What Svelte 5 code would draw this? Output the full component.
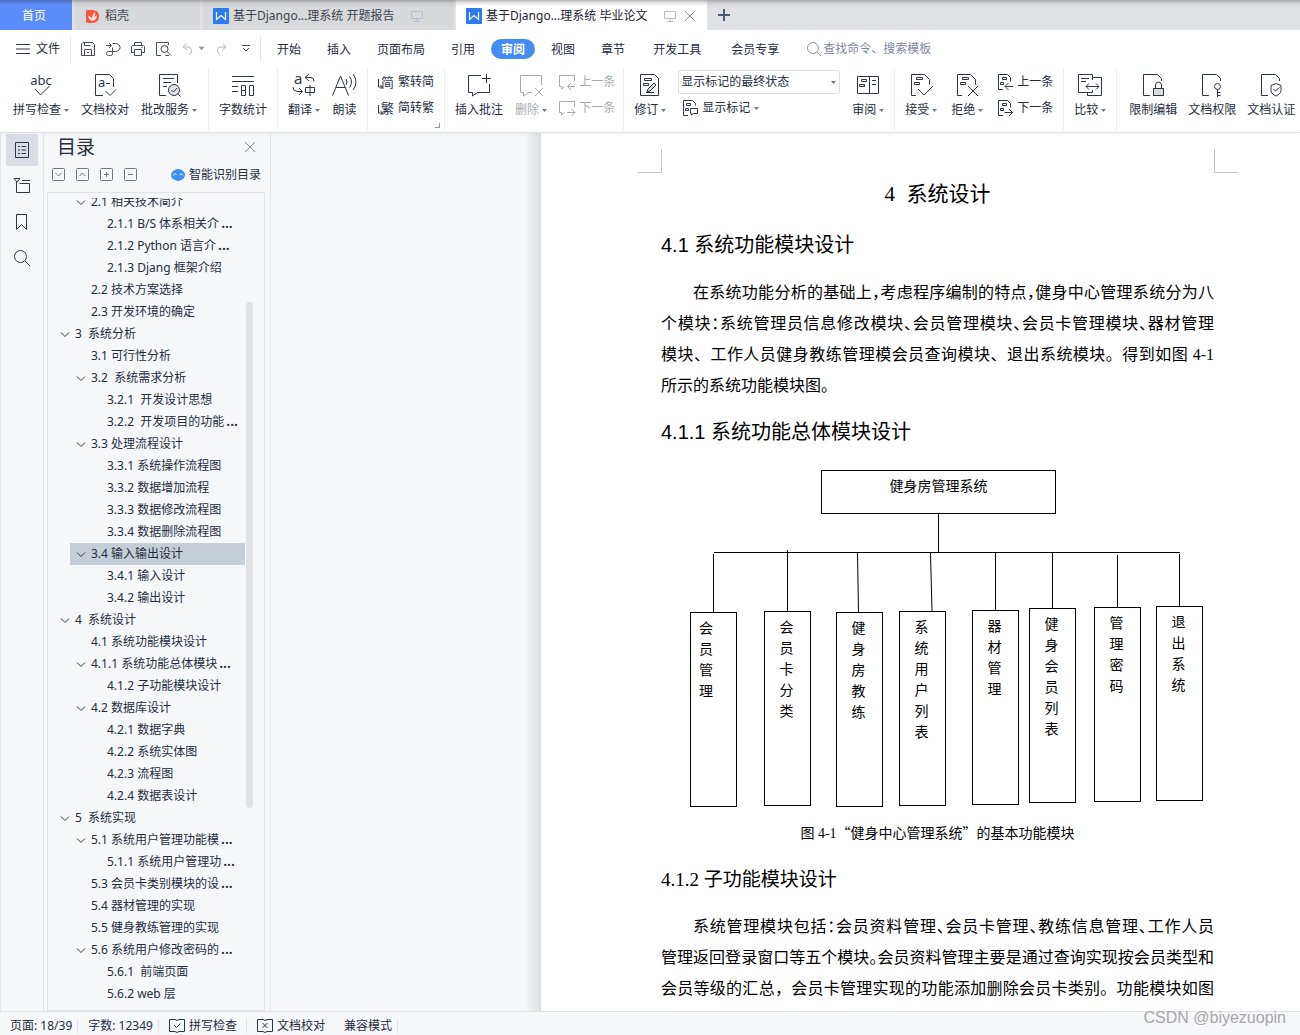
<script lang="ts">
  interface Heading {
    level: number;
    text: string;
    open?: boolean;
    cut?: boolean;
  }

  interface Module {
    x: number;
    y: number;
    name: string;
    start?: boolean;
  }

  const menus = ['开始', '插入', '页面布局', '引用', '审阅', '视图', '章节', '开发工具', '会员专享'];

  const headings: Heading[] = [
    { level: 2, text: '2.1 相关技术简介', open: true },
    { level: 3, text: '2.1.1 B/S 体系相关介', cut: true },
    { level: 3, text: '2.1.2 Python 语言介', cut: true },
    { level: 3, text: '2.1.3 Djang 框架介绍' },
    { level: 2, text: '2.2 技术方案选择' },
    { level: 2, text: '2.3 开发环境的确定' },
    { level: 1, text: '3  系统分析', open: true },
    { level: 2, text: '3.1 可行性分析' },
    { level: 2, text: '3.2  系统需求分析', open: true },
    { level: 3, text: '3.2.1  开发设计思想' },
    { level: 3, text: '3.2.2  开发项目的功能', cut: true },
    { level: 2, text: '3.3 处理流程设计', open: true },
    { level: 3, text: '3.3.1 系统操作流程图' },
    { level: 3, text: '3.3.2 数据增加流程' },
    { level: 3, text: '3.3.3 数据修改流程图' },
    { level: 3, text: '3.3.4 数据删除流程图' },
    { level: 2, text: '3.4 输入输出设计', open: true },
    { level: 3, text: '3.4.1 输入设计' },
    { level: 3, text: '3.4.2 输出设计' },
    { level: 1, text: '4  系统设计', open: true },
    { level: 2, text: '4.1 系统功能模块设计' },
    { level: 2, text: '4.1.1 系统功能总体模块', open: true, cut: true },
    { level: 3, text: '4.1.2 子功能模块设计' },
    { level: 2, text: '4.2 数据库设计', open: true },
    { level: 3, text: '4.2.1 数据字典' },
    { level: 3, text: '4.2.2 系统实体图' },
    { level: 3, text: '4.2.3 流程图' },
    { level: 3, text: '4.2.4 数据表设计' },
    { level: 1, text: '5  系统实现', open: true },
    { level: 2, text: '5.1 系统用户管理功能模', open: true, cut: true },
    { level: 3, text: '5.1.1 系统用户管理功', cut: true },
    { level: 2, text: '5.3 会员卡类别模块的设', cut: true },
    { level: 2, text: '5.4 器材管理的实现' },
    { level: 2, text: '5.5 健身教练管理的实现' },
    { level: 2, text: '5.6 系统用户修改密码的', open: true, cut: true },
    { level: 3, text: '5.6.1  前端页面' },
    { level: 3, text: '5.6.2 web 层' }
  ];

  const modules: Module[] = [
    { x: 29, y: 142, name: '会员管理', start: true },
    { x: 103, y: 141, name: '会员卡分类' },
    { x: 175, y: 142, name: '健身房教练' },
    { x: 238, y: 141, name: '系统用户列表' },
    { x: 311, y: 140, name: '器材管理' },
    { x: 368, y: 138, name: '健身会员列表' },
    { x: 433, y: 137, name: '管理密码' },
    { x: 495, y: 136, name: '退出系统' }
  ];

  let activeMenu = $state('审阅');
  let selected = $state(16);
  let markup = $state('显示标记的最终状态');
</script>

<svelte:head>
  <title>毕业论文</title>
</svelte:head>

{#snippet caret()}
  <svg class="caret" width="5" height="3" viewBox="0 0 5 3"><path d="M0 0h5L2.500 3z" /></svg>
{/snippet}

{#snippet wlogo()}
  <svg width="16" height="16" viewBox="0 0 16 16">
    <rect width="16" height="16" rx="1" fill="#2a7bf0" stroke="none" />
    <path d="M3.500 4v7.500L8 7.500l4.500 4V4" fill="none" stroke="#fff" stroke-width="1.200" />
  </svg>
{/snippet}

{#snippet monitor()}
  <svg class="monitor" width="12" height="12" viewBox="0 0 12 12">
    <path d="M.5 1.500h11v7H.5zM6 8.500v3M3 11.500h6" />
  </svg>
{/snippet}

{#snippet markDoc(kind: string)}
  <svg width="24" height="24" viewBox="0 0 24 24">
    {#if kind === 'pen'}
      <path d="M2.500 1.500h14l4 4v17h-18zM6.500 5.500h7v2h-7zM5.500 10.500h5v2h-5z" />
      <path d="M9 19l1-3 6-6 2 2-6 6zM8 19.500h8" fill="#d9dbe0" />
    {:else}
      <path d="M7 22.500H2.500v-21h13l5 5v5M7.500 4.500h6v2h-6zM5.500 9.500h5v2h-5z" />
      {#if kind === 'check'}
        <path d="M9 16l6 6 9-9" />
      {:else}
        <path d="M13 13l10 10M23 13L13 23" />
      {/if}
    {/if}
  </svg>
{/snippet}

{#snippet smallDoc(dir: string)}
  <svg width="16" height="16" viewBox="0 0 16 16">
    <path d="M6 15.500H1.500V.5h9l3 3v4M5.500 3.500h4v2h-4zM3.500 8.500h3v2h-3z" />
    {#if dir === 'prev'}
      <path d="M16 12.500H8.500M11.500 9L8 12.500l3.500 3.500" />
    {:else}
      <path d="M7.500 12.500h8M12 9l3.500 3.500L12 16" />
    {/if}
  </svg>
{/snippet}

{#snippet smallNote(dir: string)}
  <svg width="16" height="16" viewBox="0 0 16 16">
    <path d="M15.500 7V1.500H.5v11h2V15l3-2.500" />
    {#if dir === 'prev'}
      <path d="M16 12.500H9M12 9l-3.500 3.500L12 16" />
    {:else}
      <path d="M8 12.500h8M12.500 9l3.500 3.500-3.500 3.500" />
    {/if}
  </svg>
{/snippet}

{#snippet guard(kind: string)}
  <svg width="24" height="24" viewBox="0 0 24 24">
    <path d="M9 22.500H2.500v-21h14l4 4V8" />
    {#if kind === 'lock'}
      <path d="M14.500 15v-3a3 3 0 0 1 6 0v3" />
      <rect x="12.500" y="15.500" width="10" height="7" fill="#d9dbe0" />
    {:else if kind === 'key'}
      <circle cx="17.500" cy="13.500" r="3" />
      <path d="M17.500 16.500V24M17.500 19.500h3M17.500 22.500h3" />
    {:else}
      <path d="M17 10.500l5 2v5c0 3-3 4.500-5 5.500-2-1-5-2.500-5-5.500v-5zM14.500 16l2 2 4-3.500" />
    {/if}
  </svg>
{/snippet}

<div class="app">
  <header>
    <nav class="tabs" aria-label="文档标签">
      <button class="tab home">首页</button>
      <button class="tab docer">
        <svg width="13" height="15" viewBox="0 0 13 15">
          <path d="M0 3q0-2 2-2h4q7 0 7 6.500T6 14H2q-2 0-2-2z" fill="#f2553f" stroke="none" />
          <path d="M6.500 12C3 11 2 9 2.500 6.500 4 7 5.500 8 6 9.500 6 6.500 7 4.500 9 3c.5 2 0 3-.5 4.500L11 6.500C11 9 10 11 6.500 12z" fill="#fbd9d3" stroke="none" />
        </svg>
        稻壳
      </button>
      <button class="tab doc">{@render wlogo()}<span>基于Django...理系统 开题报告</span>{@render monitor()}</button>
      <button class="tab doc current">
        {@render wlogo()}<span>基于Django...理系统 毕业论文</span>{@render monitor()}
        <svg class="close" width="10" height="10" viewBox="0 0 10 10"><path d="M0 0l10 10M10 0L0 10" /></svg>
      </button>
      <button class="plus" aria-label="新建">
        <svg width="12" height="12" viewBox="0 0 12 12"><path d="M6 0v12M0 6h12" /></svg>
      </button>
    </nav>

    <div class="menubar">
      <button class="file">
        <svg width="14" height="10" viewBox="0 0 14 10"><path d="M0 .5h14M0 5h14M0 9.500h14" /></svg>
        文件
      </button>
      <div class="quick">
        <button aria-label="保存">
          <svg width="14" height="14" viewBox="0 0 14 14"><path d="M.5 13.500V2L2 .5h9.500l2 2v11zM3.500 13V7.500h7V13M3.500.5v3h6M6 10.500h2" /></svg>
        </button>
        <button aria-label="输出">
          <svg width="14" height="14" viewBox="0 0 14 14"><path d="M0 3.500h5M3 1l2.500 2.500L3 6M6.500 1.500h3a4 3.500 0 0 1 0 8H2.500a2 2 0 0 0 0 4h2a2 2 0 0 0 2-2v-6" /></svg>
        </button>
        <button aria-label="打印">
          <svg width="14" height="14" viewBox="0 0 14 14"><path d="M3.500 3.500v-3h7v3M3 10.500H.5v-6l1-1h11l1 1v6H11M3.500 7.500h7v6h-7zM10.500 5.500h1" /></svg>
        </button>
        <button aria-label="打印预览">
          <svg width="15" height="14" viewBox="0 0 15 14"><path d="M5 13.500H.5V.5h12V3M9.500 13.500H13" /><circle cx="8.500" cy="7" r="3.500" /><path d="M11 9.500l4 4" /></svg>
        </button>
        <button class="off undo" aria-label="撤销">
          <svg width="12" height="12" viewBox="0 0 12 12"><path d="M4 .5L1 4l4 3M1 4h6a4 4 0 0 1 0 7.500" /></svg>
          {@render caret()}
        </button>
        <button class="off" aria-label="恢复">
          <svg width="12" height="12" viewBox="0 0 12 12"><path d="M8 .5L11 4 7 7M11 4H5a4 4 0 0 0 0 7.500" /></svg>
        </button>
        <button aria-label="自定义快速访问">
          <svg width="8" height="7" viewBox="0 0 8 7"><path d="M0 .5h8M1 3l3 3 3-3" /></svg>
        </button>
      </div>
      <nav class="menus" aria-label="功能区">
        {#each menus as m}
          <button class:active={m === activeMenu} onclick={() => (activeMenu = m)}>{m}</button>
        {/each}
      </nav>
      <label class="search">
        <svg width="14" height="14" viewBox="0 0 14 14"><circle cx="6" cy="6" r="5.500" /><path d="M10 10l4 4" /></svg>
        <input type="text" aria-label="搜索" placeholder="查找命令、搜索模板" />
      </label>
    </div>

    <div class="ribbon">
      <div class="group first">
        <button class="tool">
          <svg width="24" height="24" viewBox="0 0 24 24"><text x="12" y="12" text-anchor="middle">abc</text><path d="M6 16l5.500 6 9-9" /></svg>
          <span>拼写检查{@render caret()}</span>
        </button>
        <button class="tool">
          <svg width="24" height="24" viewBox="0 0 24 24"><path d="M10 22.500H2.500v-21h14l4 4V14M12.500 18l4.500 4.500 6-6M13 10.500h4" /><text x="5" y="14">a</text></svg>
          <span>文档校对</span>
        </button>
        <button class="tool">
          <svg width="24" height="24" viewBox="0 0 24 24"><path d="M9 22.500H2.500v-21h18V10M6 5.500h11M6 9.500h8M6 13.500h4" /><circle cx="17" cy="17" r="5.500" fill="#e1e3e7" /><path d="M14.500 17l2 2 3.500-4M20.500 20.500l3 3" /></svg>
          <span>批改服务{@render caret()}</span>
        </button>
      </div>
      <div class="group">
        <button class="tool">
          <svg width="24" height="24" viewBox="0 0 24 24"><path d="M1 3.500h22M1 8.500h22M1 13.500h6M1 18.500h6M10.500 12.500h4v10h-4zM10.500 17.500h4M18.500 12.500h4v10h-4z" /></svg>
          <span>字数统计</span>
        </button>
      </div>
      <div class="group">
        <button class="tool">
          <svg width="24" height="24" viewBox="0 0 24 24"><text class="big" x="2" y="11">a</text><path d="M17 1l-4 3.500L17 8M13.500 4.500H19q3 0 3 4M1 14q0 4 4 4.500h5M7 15l3.500 3.500L7 22M13.500 14.500h9v5h-9zM18 12v11" /></svg>
          <span>翻译{@render caret()}</span>
        </button>
        <button class="tool">
          <svg width="25" height="24" viewBox="0 0 25 24"><path d="M.5 22.500L8.500 3l8 19.500M4 14.500h9.500M14 6q2 3 0 6M17.500 3.500q4 5.500 0 11M21 1q6 8 0 16" /></svg>
          <span>朗读</span>
        </button>
      </div>
      <div class="group corner">
        <div class="stack">
          <button class="line">
            <svg width="16" height="16" viewBox="0 0 16 16"><text x="3" y="13">简</text><path d="M.5 5v8h4M2.500 11l2 2-2 2" /></svg>
            繁转简
          </button>
          <button class="line">
            <svg width="16" height="16" viewBox="0 0 16 16"><text x="3" y="13">繁</text><path d="M.5 5v8h4M2.500 11l2 2-2 2" /></svg>
            简转繁
          </button>
        </div>
      </div>
      <div class="group snug">
        <button class="tool">
          <svg width="24" height="24" viewBox="0 0 24 24"><path d="M14 2.500H1.500v17h4V23l5-3.500h12V11M19.500 1v9M15 5.500h9" /></svg>
          <span>插入批注</span>
        </button>
        <button class="tool off">
          <svg width="24" height="24" viewBox="0 0 24 24"><path d="M22.500 12V2.500H1.500v17h3V23l5-3.500h4M16 15l8 8M24 15l-8 8" /></svg>
          <span>删除{@render caret()}</span>
        </button>
        <div class="stack">
          <button class="line off">{@render smallNote('prev')}上一条</button>
          <button class="line off">{@render smallNote('next')}下一条</button>
        </div>
      </div>
      <div class="group">
        <button class="tool">
          {@render markDoc('pen')}
          <span>修订{@render caret()}</span>
        </button>
        <div class="stack view">
          <div class="pick">
            <select aria-label="显示以供审阅" bind:value={markup}>
              <option>显示标记的最终状态</option>
              <option>最终状态</option>
              <option>显示标记的原始状态</option>
              <option>原始状态</option>
            </select>
            {@render caret()}
          </div>
          <button class="line">
            <svg width="16" height="16" viewBox="0 0 16 16"><path d="M6 15.500H1.500V.5h9l3 3v2M4.500 3.500h4v2h-4zM3.500 8.500h3v2h-3zM8.500 8.500h7v5h-4L9.500 15v-1.500h-1z" /></svg>
            显示标记{@render caret()}
          </button>
        </div>
        <button class="tool">
          <svg width="24" height="24" viewBox="0 0 24 24"><path d="M1.500 3.500h21v17h-21zM13.500 3.500v17M5.500 6.500h5v2h-5zM3.500 11.500h5v2h-5zM16 7.500h4M16 11.500h4" /></svg>
          <span>审阅{@render caret()}</span>
        </button>
      </div>
      <div class="group roomy">
        <button class="tool">{@render markDoc('check')}<span>接受{@render caret()}</span></button>
        <button class="tool">{@render markDoc('cross')}<span>拒绝{@render caret()}</span></button>
        <div class="stack">
          <button class="line">{@render smallDoc('prev')}上一条</button>
          <button class="line">{@render smallDoc('next')}下一条</button>
        </div>
      </div>
      <div class="group">
        <button class="tool">
          <svg width="24" height="24" viewBox="0 0 24 24"><path d="M14.500 7V1.500h-14v18h14V17M14.500 4.500h9v18h-14v-3M3 5.500h8M3 8.500h5M8 13.500h13M11 10.500l-3 3 3 3M18 10.500l3 3-3 3" /></svg>
          <span>比较{@render caret()}</span>
        </button>
      </div>
      <div class="group last">
        <button class="tool">{@render guard('lock')}<span>限制编辑</span></button>
        <button class="tool">{@render guard('key')}<span>文档权限</span></button>
        <button class="tool">{@render guard('shield')}<span>文档认证</span></button>
      </div>
    </div>
  </header>

  <div class="work">
    <nav class="rail" aria-label="导航窗格">
      <button class="on" aria-label="目录">
        <svg width="16" height="16" viewBox="0 0 16 16"><path d="M1.500.5h13v15h-13zM4 4.500h2M7.500 4.500H12M4 8h2M7.500 8H12M4 11.500h2M7.500 11.500H12" /></svg>
      </button>
      <button aria-label="章节">
        <svg width="16" height="16" viewBox="0 0 16 16"><path d="M0 .5h6L3 4zM8 2.500h8M2.500 4v10.500h13v-9h-10" /></svg>
      </button>
      <button aria-label="书签">
        <svg width="16" height="16" viewBox="0 0 16 16"><path d="M2.500.5h10v15l-5-5-5 5z" /></svg>
      </button>
      <button aria-label="查找">
        <svg width="16" height="16" viewBox="0 0 16 16"><circle cx="6.500" cy="6.500" r="6" /><path d="M11 11l5 5" /></svg>
      </button>
    </nav>

    <aside class="outline">
      <div class="title">
        <h2>目录</h2>
        <button aria-label="关闭">
          <svg width="10" height="10" viewBox="0 0 10 10"><path d="M0 0l10 10M10 0L0 10" /></svg>
        </button>
      </div>
      <div class="actions">
        {#each [['展开', 'M3.500 5l3 3 3-3'], ['折叠', 'M3.500 8l3-3 3 3'], ['增加', 'M6.500 4v5M4 6.500h5'], ['减少', 'M4 6.500h5']] as [name, d]}
          <button aria-label={name}>
            <svg width="13" height="13" viewBox="0 0 13 13"><rect x=".5" y=".5" width="12" height="12" rx="1" /><path {d} /></svg>
          </button>
        {/each}
        <button class="smart">
          <svg width="14" height="12" viewBox="0 0 14 12">
            <rect y="1" width="14" height="10" rx="5" fill="#3f8ef5" />
            <rect x="2" width="10" height="12" rx="5" fill="#3f8ef5" />
            <path d="M2 6.500l2-2 1.500 1.500M8.500 6l1.500-1.500 2 2" fill="none" stroke="#fff" />
          </svg>
          智能识别目录
        </button>
      </div>
      <div class="tree">
        <div class="clip">
          <ul>
            {#each headings as h, i}
              <li class="level{h.level}" class:selected={i === selected}>
                <button onclick={() => (selected = i)}>
                  <svg width="10" height="6" viewBox="0 0 10 6">{#if h.open}<path d="M1 1.500l4 4 4-4" />{/if}</svg>
                  <span>{h.text}{#if h.cut}<b>...</b>{/if}</span>
                </button>
              </li>
            {/each}
          </ul>
        </div>
        <div class="thumb"></div>
      </div>
    </aside>

    <div class="desk"></div>

    <main class="sheet">
      <div class="marks"><i></i><i></i></div>
      <article>
        <h1><span class="serif">4</span>&nbsp; 系统设计</h1>
        <h2>4.1 系统功能模块设计</h2>
        <p>
          <span class="row indent tight">在系统功能分析的基础上，考虑程序编制的特点，健身中心管理系统分为八</span>
          <span class="row tight">个模块：系统管理员信息修改模块、会员管理模块、会员卡管理模块、器材管理</span>
          <span class="row">模块、工作人员健身教练管理模会员查询模块、退出系统模块。得到如图 4-1</span>
          <span class="row end">所示的系统功能模块图。</span>
        </p>
        <h3>4.1.1 系统功能总体模块设计</h3>
        <figure>
          <div class="chart">
            <svg width="553" height="337" viewBox="0 0 553 337">
              <path d="M277.500 44v38M53 82.500h466M52.500 84v58M126.500 80v61M196.500 83l1 59M269.500 83l1.500 58M334.500 82v58M391.500 82v56M456.500 85v52M518.500 84v52" />
            </svg>
            <div class="root">健身房管理系统</div>
            {#each modules as m}
              <div class="module" class:start={m.start} style="left: {m.x}px; top: {m.y}px"><span>{m.name}</span></div>
            {/each}
          </div>
          <figcaption>图 4-1<span>“健身中心管理系统”的基本功能模块</span></figcaption>
        </figure>
        <h3 class="sub">4.1.2 子功能模块设计</h3>
        <p class="flush">
          <span class="row indent tight">系统管理模块包括：会员资料管理、会员卡管理、教练信息管理、工作人员</span>
          <span class="row tight">管理返回登录窗口等五个模块。会员资料管理主要是通过查询实现按会员类型和</span>
          <span class="row">会员等级的汇总，会员卡管理实现的功能添加删除会员卡类别。功能模块如图</span>
        </p>
      </article>
    </main>
  </div>

  <footer>
    <span class="cell">页面: 18/39</span>
    <span class="cell">字数: 12349</span>
    <button class="cell wide">
      <svg width="16" height="14" viewBox="0 0 16 14"><path d="M6 .5H.5v12H6l2 1 2-1h5.500V.5H10l-2 1zM5 6l2.500 2.500 4-4" /></svg>
      拼写检查
    </button>
    <button class="cell wide plain">
      <svg width="16" height="14" viewBox="0 0 16 14"><path d="M6 .5H.5v12H6l2 1 2-1h5.500V.5H10l-2 1zM5.500 4l5 5M10.500 4l-5 5" /></svg>
      文档校对
    </button>
    <span class="cell">兼容模式</span>
  </footer>
  <div class="watermark">CSDN @biyezuopin</div>
</div>

<style>
  :global(body) {
    margin: 0;
  }
  .app {
    position: relative;
    display: flex;
    flex-direction: column;
    height: 100vh;
    overflow: hidden;
    background: #f6f7f9;
    color: #252d3d;
    font: 12px/16px 'Noto Sans', 'Noto Sans CJK SC', sans-serif;
  }
  button {
    display: flex;
    align-items: center;
    padding: 0;
    border: 0;
    background: none;
    color: inherit;
    font: inherit;
    white-space: nowrap;
  }
  svg {
    flex: none;
    overflow: visible;
    fill: none;
    stroke: #2d3648;
  }
  svg text {
    fill: #2d3648;
    stroke: none;
    font-size: 13px;
  }
  svg text.big {
    font-size: 15px;
  }
  .caret {
    fill: #6d7892;
    stroke: none;
  }

  /* tabs */
  .tabs {
    display: flex;
    height: 30px;
    background: linear-gradient(#a9a9ab, #cfd0d3 3px, #e1e2e6 7px);
  }
  .tab {
    gap: 4px;
    box-sizing: border-box;
    height: 30px;
    padding-top: 2px;
    color: #3f444e;
    background: linear-gradient(#a4a4a6, #c8c9cb 3px, #d8d9dc 7px);
  }
  .home {
    justify-content: center;
    width: 72px;
    margin-right: 3px;
    padding-right: 4px;
    color: #fff;
    background: linear-gradient(#4a70bd, #5b8dfa 5px);
  }
  .docer {
    gap: 6px;
    width: 125px;
    margin-right: 3px;
    padding-left: 11px;
  }
  .doc {
    width: 251px;
    margin-right: 2px;
    padding-left: 10px;
  }
  .doc span {
    flex: none;
  }
  .monitor {
    margin-left: 13px;
    stroke: #b5bccb;
  }
  .close {
    margin-left: 5px;
    stroke: #8c96ad;
  }
  .current {
    margin-right: 1px;
    color: #1c2230;
    background: linear-gradient(#b4b4b6, #e8e8e8 3px, #fff 6px);
  }
  .plus {
    padding: 0 10px;
  }
  .plus svg {
    stroke: #4d5873;
    stroke-width: 2;
  }

  /* menu bar */
  .menubar {
    display: flex;
    align-items: center;
    height: 37px;
    background: #fff;
  }
  .file {
    gap: 6px;
    height: 24px;
    padding: 0 10px 0 16px;
    border-right: 1px solid #e1e3e8;
  }
  .quick {
    display: flex;
    align-items: center;
    gap: 11px;
    height: 24px;
    padding: 0 10px;
    border-right: 1px solid #e1e3e8;
  }
  .quick svg {
    stroke: #454d5c;
  }
  .quick .off svg {
    stroke: #b4b8c0;
  }
  .quick .caret {
    stroke: none;
  }
  .quick .undo {
    gap: 5px;
  }
  .quick button:last-child {
    margin-left: 4px;
  }
  .menus {
    display: flex;
    gap: 6px;
    margin-left: 6px;
  }
  .menus button {
    box-sizing: border-box;
    height: 20px;
    padding: 2px 10px 0;
    border-radius: 10px;
  }
  .menus button:nth-child(n + 8) {
    padding: 2px 12px 0;
  }
  .menus .active {
    background: #438df2;
    color: #fff;
    font-weight: 700;
  }
  .search {
    display: flex;
    align-items: center;
    gap: 2px;
    flex: 1;
    margin-left: 16px;
  }
  .search svg {
    stroke: #8b93a8;
  }
  .search input {
    width: 200px;
    padding: 1px 0 0;
    border: 0;
    outline: 0;
    background: none;
    font: inherit;
  }
  .search input::placeholder {
    color: #7f889f;
  }

  /* ribbon */
  .ribbon {
    position: relative;
    z-index: 1;
    display: flex;
    height: 65px;
    padding-left: 2px;
    border-bottom: 1px solid #e2e3e6;
    background: #fff;
    box-shadow: 0 1px 3px #0000000d;
  }
  .group {
    display: flex;
    align-items: flex-start;
    gap: 12px;
    flex: none;
    box-sizing: border-box;
    height: 62px;
    margin-top: 1px;
    padding: 5px 10px 0;
    border-right: 1px solid #eceef1;
  }
  .group.first {
    padding: 5px 11px 0;
  }
  .group.snug {
    padding-right: 8px;
  }
  .group.roomy {
    gap: 14px;
  }
  .group.last {
    gap: 11px;
    padding: 5px 12px 0;
    border: 0;
  }
  .tool {
    flex-direction: column;
    gap: 5px;
  }
  .tool span {
    display: flex;
    align-items: center;
    gap: 3px;
  }
  .stack {
    display: flex;
    flex-direction: column;
    gap: 10px;
    margin-top: 1px;
  }
  .line {
    gap: 4px;
    height: 16px;
  }
  .off {
    color: #a8abb2;
  }
  .off svg {
    stroke: #a8abb2;
  }
  .off .caret {
    stroke: none;
  }
  .corner {
    position: relative;
  }
  .corner::after {
    content: '';
    position: absolute;
    right: 4px;
    bottom: 2px;
    width: 4px;
    height: 4px;
    border: solid #8b93a8;
    border-width: 0 1px 1px 0;
  }
  .view {
    gap: 6px;
    margin-top: -3px;
  }
  .view .line {
    margin-left: 4px;
  }
  .pick {
    position: relative;
  }
  .pick select {
    width: 162px;
    height: 24px;
    padding: 0 2px;
    appearance: none;
    border: 1px solid #dcdfe4;
    border-radius: 2px;
    background: #fff;
    color: inherit;
    font: inherit;
  }
  .pick .caret {
    position: absolute;
    top: 11px;
    right: 4px;
  }

  /* side panels */
  .work {
    display: flex;
    flex: 1;
    min-height: 0;
  }
  .rail {
    display: flex;
    flex-direction: column;
    align-items: center;
    gap: 4px;
    width: 42px;
    padding-top: 1px;
    border: solid #e2e5ea;
    border-width: 0 1px;
  }
  .rail button {
    justify-content: center;
    width: 32px;
    height: 32px;
    border-radius: 2px;
  }
  .rail .on {
    background: #d9dde4;
  }
  .outline {
    display: flex;
    flex-direction: column;
    width: 226px;
    border-right: 1px solid #e2e5ea;
  }
  .title {
    display: flex;
    align-items: center;
    justify-content: space-between;
    height: 28px;
    padding: 0 15px 0 13px;
  }
  .title h2 {
    margin: 0;
    font-size: 19px;
    font-weight: 400;
  }
  .title svg {
    stroke: #7d869c;
  }
  .actions {
    display: flex;
    align-items: center;
    gap: 11px;
    height: 26px;
    padding: 0 9px 5px 8px;
  }
  .actions svg {
    stroke: #6d7585;
  }
  .actions .smart {
    gap: 4px;
    margin-left: auto;
    padding-top: 2px;
  }
  .actions .smart svg {
    stroke: none;
  }
  .tree {
    display: flex;
    flex: 1;
    min-height: 0;
    margin: 0 5px 0 3px;
    border: 1px solid #e0e3e9;
    border-radius: 2px;
  }
  .clip {
    flex: 1;
    margin-top: 5px;
    overflow: hidden;
  }
  .tree ul {
    margin: -7px 0 0 22px;
    padding: 0;
    list-style: none;
  }
  .tree li {
    height: 22px;
  }
  .tree li button {
    gap: 5px;
    width: 100%;
    height: 22px;
    padding-left: 6px;
    white-space: pre;
  }
  .tree .level1 button {
    margin-left: -16px;
  }
  .tree .level3 button {
    padding-left: 22px;
  }
  .tree .selected {
    background: #c5cdd6;
  }
  .tree b {
    margin-left: 2px;
    font-size: 14px;
    font-weight: 600;
    line-height: 1;
  }
  .thumb {
    width: 7px;
    height: 506px;
    margin: 109px 11px 0 1px;
    border-radius: 4px;
    background: #dfe1e5;
  }

  /* document */
  .desk {
    width: 270px;
    background: linear-gradient(to left, #dcdde0, #f6f7f9 16px);
  }
  .sheet {
    flex: 1;
    overflow: hidden;
    padding-top: 16px;
    background: #fff;
    color: #000;
  }
  .marks {
    display: flex;
    justify-content: space-between;
    width: 600px;
    margin-left: 97px;
  }
  .marks i {
    width: 23px;
    height: 23px;
    border: solid #c4c4c4;
    border-width: 0 1px 1px 0;
  }
  .marks i:last-child {
    border-width: 0 0 1px 1px;
  }
  article {
    width: 553px;
    margin-left: 120px;
    font-family: 'Liberation Serif', 'Noto Sans CJK SC', serif;
  }
  article h1,
  article h2,
  article h3 {
    margin: 0;
    font-weight: 400;
    font-family: 'Liberation Sans', 'Noto Sans CJK SC', sans-serif;
  }
  article h1 {
    font-size: 21px;
    line-height: 42px;
    text-align: center;
  }
  .serif {
    font-family: 'Liberation Serif', serif;
  }
  article h2 {
    font-size: 20px;
    line-height: 60px;
  }
  article h3 {
    font-size: 20px;
    line-height: 62px;
  }
  article h3.sub {
    font-family: 'Liberation Serif', 'Noto Sans CJK SC', serif;
    font-size: 19px;
  }
  p {
    margin: 2px 0 0;
    font-size: 16px;
    line-height: 31px;
  }
  p.flush {
    margin: 0;
  }
  .row {
    display: block;
    text-align: justify;
    text-align-last: justify;
    white-space: nowrap;
  }
  .indent {
    padding-left: 32px;
  }
  .tight {
    font-feature-settings: 'halt';
  }
  .end {
    text-align-last: left;
  }
  figure {
    margin: 7px 0 0;
    font-size: 14px;
  }
  .chart {
    position: relative;
    height: 347px;
  }
  .chart svg {
    display: block;
    stroke: #000;
  }
  .root,
  .module {
    position: absolute;
    box-sizing: border-box;
    border: 1px solid #000;
  }
  .root {
    top: 0;
    left: 160px;
    width: 235px;
    height: 44px;
    line-height: 32px;
    text-align: center;
  }
  .module {
    display: flex;
    justify-content: center;
    width: 47px;
    height: 195px;
    padding-top: 5px;
    padding-right: 2px;
    line-height: 21px;
  }
  .module span {
    width: 14px;
  }
  .module.start {
    justify-content: flex-start;
    padding-left: 8px;
  }
  figcaption {
    line-height: 31px;
    text-align: center;
  }
  figcaption span {
    font-family: 'Noto Sans CJK SC', sans-serif;
  }

  /* status bar */
  footer {
    display: flex;
    align-items: center;
    height: 19px;
    padding-top: 4px;
    border-top: 1px solid #e0e3e9;
    background: #f6f7f9;
  }
  .cell {
    display: flex;
    align-items: center;
    gap: 4px;
    height: 14px;
    padding: 0 5px 0 10px;
    border-right: 1px solid #dfe2e8;
  }
  footer .wide {
    padding-right: 9px;
  }
  footer .plain {
    border: 0;
  }
  .watermark {
    position: absolute;
    right: 14px;
    bottom: 7px;
    color: #a6a7aa;
    font-family: 'Liberation Sans', sans-serif;
    font-size: 16px;
    line-height: 20px;
  }
</style>
